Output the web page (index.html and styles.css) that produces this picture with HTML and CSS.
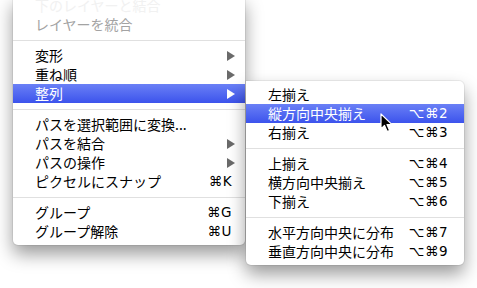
FILE: index.html
```html
<!DOCTYPE html>
<html lang="ja">
<head>
<meta charset="utf-8">
<link rel="stylesheet" href="styles.css">
</head>
<body>
<div class="stage">
  <div class="menu main">
    <div class="item ghost"><span class="label">下のレイヤーと結合</span></div>
    <div class="item disabled"><span class="label">レイヤーを統合</span></div>
    <div class="sep"></div>
    <div class="item"><span class="label">変形</span><span class="arrow"></span></div>
    <div class="item"><span class="label">重ね順</span><span class="arrow"></span></div>
    <div class="item active"><span class="label">整列</span><span class="arrow"></span></div>
    <div class="sep"></div>
    <div class="item"><span class="label">パスを選択範囲に変換...</span></div>
    <div class="item"><span class="label">パスを結合</span><span class="arrow"></span></div>
    <div class="item"><span class="label">パスの操作</span><span class="arrow"></span></div>
    <div class="item"><span class="label">ピクセルにスナップ</span><span class="key">⌘K</span></div>
    <div class="sep"></div>
    <div class="item"><span class="label">グループ</span><span class="key">⌘G</span></div>
    <div class="item"><span class="label">グループ解除</span><span class="key">⌘U</span></div>
  </div>
  <div class="menu sub">
    <div class="item"><span class="label">左揃え</span></div>
    <div class="item active"><span class="label">縦方向中央揃え</span><span class="key">⌥⌘2</span></div>
    <div class="item"><span class="label">右揃え</span><span class="key">⌥⌘3</span></div>
    <div class="sep"></div>
    <div class="item"><span class="label">上揃え</span><span class="key">⌥⌘4</span></div>
    <div class="item"><span class="label">横方向中央揃え</span><span class="key">⌥⌘5</span></div>
    <div class="item"><span class="label">下揃え</span><span class="key">⌥⌘6</span></div>
    <div class="sep"></div>
    <div class="item"><span class="label">水平方向中央に分布</span><span class="key">⌥⌘7</span></div>
    <div class="item"><span class="label">垂直方向中央に分布</span><span class="key">⌥⌘9</span></div>
  </div>
  <svg class="cursor" width="14" height="20" viewBox="0 0 14 20">
    <path d="M1 1 L1 16 L4.5 12.5 L7.2 18.6 L9.6 17.6 L7 11.6 L12 11.6 Z" fill="#000" stroke="#fff" stroke-width="1.2" stroke-linejoin="round"/>
  </svg>
</div>
</body>
</html>
```

FILE: styles.css
```css
html, body {
  margin: 0;
  padding: 0;
  background: #ffffff;
}

body {
  font-family: "Noto Sans CJK JP", "DejaVu Sans", sans-serif;
  font-size: 14px;
  color: #000;
}

.stage {
  position: relative;
  display: flex;
  align-items: flex-start;
  padding-left: 13px;
  width: 477px;
  height: 288px;
  box-sizing: border-box;
  overflow: hidden;
}

.menu {
  background: #ffffff;
  box-shadow: 0 0 0 1px rgba(0, 0, 0, 0.06), 0 9px 18px rgba(0, 0, 0, 0.4);
}

.main {
  width: 232px;
  margin-top: -4px;
  padding-bottom: 4px;
  border-radius: 0 0 5px 5px;
  flex: none;
}

.sub {
  width: 218px;
  margin-left: 1px;
  margin-top: 81px;
  padding: 4px 0;
  border-radius: 0 5px 5px 5px;
  flex: none;
}

.item {
  height: 19px;
  line-height: 19px;
  display: flex;
  align-items: center;
  padding: 0 10px 0 22px;
  white-space: nowrap;
}

.sub .item {
  padding-right: 16px;
}

.label {
  flex: 1;
}

.key {
  font-family: "DejaVu Sans", "Noto Sans CJK JP", sans-serif;
  font-size: 13.5px;
  margin-right: 3px;
  letter-spacing: 0.5px;
}

.sub .key {
  margin-right: 0;
}

.arrow {
  width: 0;
  height: 0;
  border-left: 8px solid #6a6a6a;
  border-top: 5px solid transparent;
  border-bottom: 5px solid transparent;
}

.disabled {
  color: #a3a3a3;
}

.ghost {
  color: #f1f1f1;
}

.active {
  background: linear-gradient(#6a80f6, #3c53ec);
  color: #ffffff;
}

.active .arrow {
  border-left-color: #ffffff;
}

.sep {
  height: 12px;
  display: flex;
  align-items: center;
}

.sep::before {
  content: "";
  display: block;
  width: 100%;
  height: 1px;
  background: #e0e0e0;
}

.cursor {
  position: absolute;
  left: 380px;
  top: 113px;
}
```
